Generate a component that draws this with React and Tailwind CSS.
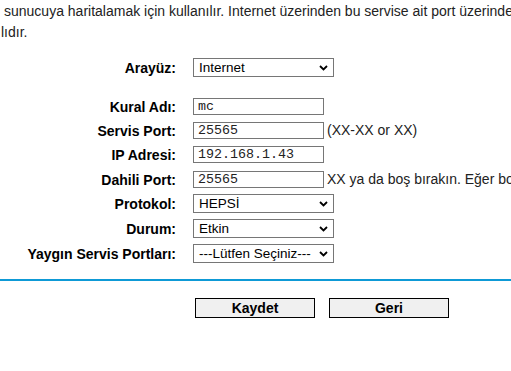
import React from "react";

const Chevron = () => (
  <svg width="9" height="6" viewBox="0 0 9 6" className="shrink-0">
    <path d="M1 1 L4.5 4.5 L8 1" fill="none" stroke="#000" strokeWidth="1.8" />
  </svg>
);

const Sel = ({ value }) => (
  <div className="w-[141px] h-[19px] border border-[#767676] bg-white flex items-center justify-between pl-[5px] pr-[5px] text-[13.5px] text-black leading-none whitespace-nowrap">
    <span>{value}</span>
    <Chevron />
  </div>
);

const Inp = ({ value }) => (
  <div className="w-[131px] h-[17px] border border-[#767676] bg-white flex items-center pl-[4px] text-[13.33px] text-[#222] leading-none font-['Liberation_Mono',monospace]">
    {value}
  </div>
);

const Label = ({ children }) => (
  <div className="text-right font-bold text-[14px] text-black leading-none">{children}</div>
);

export default function App() {
  return (
    <div className="w-[511px] h-[371px] overflow-hidden bg-white font-['Liberation_Sans',Arial,sans-serif]">
      <div className="pt-[1px] text-[14px] text-[#222] whitespace-nowrap leading-[21px]">
        <div className="pl-[4px]">sunucuya haritalamak için kullanılır. Internet üzerinden bu servise ait port üzerinden</div>
        <div className="pl-[1px]">lıdır.</div>
      </div>

      <div className="mt-[15px] grid grid-cols-[176px_1fr] gap-x-[17px] items-center">
        <Label>Arayüz:</Label>
        <div className="h-[19px]"><Sel value="Internet" /></div>

        <div className="h-[21px] col-span-2" />

        <Label>Kural Adı:</Label>
        <div className="h-[17px]"><Inp value="mc" /></div>

        <div className="h-[7px] col-span-2" />
        <Label>Servis Port:</Label>
        <div className="h-[17px] flex items-center gap-[3px] whitespace-nowrap text-[14px] text-[#222]">
          <Inp value="25565" />
          <span>(XX-XX or XX)</span>
        </div>

        <div className="h-[7px] col-span-2" />
        <Label>IP Adresi:</Label>
        <div className="h-[17px]"><Inp value="192.168.1.43" /></div>

        <div className="h-[8px] col-span-2" />
        <Label>Dahili Port:</Label>
        <div className="h-[17px] flex items-center gap-[3px] whitespace-nowrap text-[14px] text-[#222]">
          <Inp value="25565" />
          <span>XX ya da boş bırakın. Eğer boş</span>
        </div>

        <div className="h-[6px] col-span-2" />
        <Label>Protokol:</Label>
        <div className="h-[19px]"><Sel value="HEPSİ" /></div>

        <div className="h-[6px] col-span-2" />
        <Label>Durum:</Label>
        <div className="h-[19px]"><Sel value="Etkin" /></div>

        <div className="h-[6px] col-span-2" />
        <Label>Yaygın Servis Portları:</Label>
        <div className="h-[19px]"><Sel value="---Lütfen Seçiniz---" /></div>
      </div>

      <div className="mt-[16px] h-[2px] bg-[#0e9ad6]" />

      <div className="mt-[17px] flex gap-[14px] pl-[195px]">
        <button className="w-[120px] h-[20px] border border-black bg-[#f0f0f0] font-bold text-[14px] text-black leading-none">Kaydet</button>
        <button className="w-[120px] h-[20px] border border-black bg-[#f0f0f0] font-bold text-[14px] text-black leading-none">Geri</button>
      </div>
    </div>
  );
}
